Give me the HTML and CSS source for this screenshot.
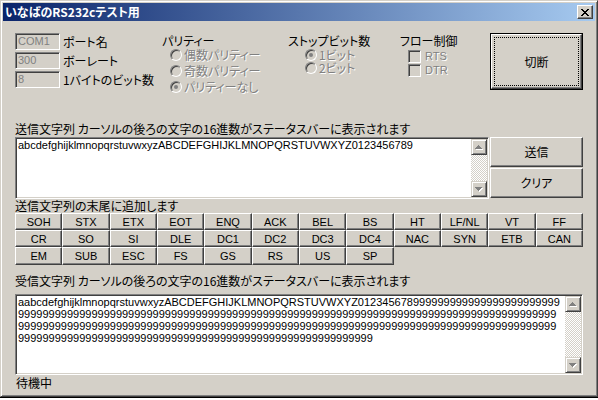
FILE: index.html
```html
<!DOCTYPE html>
<html lang="ja">
<head>
<meta charset="utf-8">
<title>いなばのRS232cテスト用</title>
<link rel="stylesheet" href="styles.css">
</head>
<body>
<div class="window">
  <div class="titlebar">
    <span class="title">いなばのRS232cテスト用</span>
    <span class="closebtn"><svg width="8" height="7" viewBox="0 0 8 7" shape-rendering="crispEdges"><path d="M0 0h2v1h-2zM6 0h2v1h-2zM1 1h2v1h-2zM5 1h2v1h-2zM2 2h4v1h-4zM3 3h2v1h-2zM2 4h4v1h-4zM1 5h2v1h-2zM5 5h2v1h-2zM0 6h2v1h-2zM6 6h2v1h-2z" fill="#000"/></svg></span>
  </div>
  <div class="client">
    <div class="top">
      <div class="port">
        <div class="frow"><div class="edit">COM1</div><span>ポート名</span></div>
        <div class="frow"><div class="edit">300</div><span>ボーレート</span></div>
        <div class="frow"><div class="edit">8</div><span>1バイトのビット数</span></div>
      </div>
      <div class="group parity">
        <div class="ghead">パリティー</div>
        <div class="opt"><span class="radio"></span><span class="dis">偶数パリティー</span></div>
        <div class="opt"><span class="radio"></span><span class="dis">奇数パリティー</span></div>
        <div class="opt"><span class="radio on"></span><span class="dis">パリティーなし</span></div>
      </div>
      <div class="group stop">
        <div class="ghead">ストップビット数</div>
        <div class="opt"><span class="radio on"></span><span class="dis">1ビット</span></div>
        <div class="opt"><span class="radio"></span><span class="dis">2ビット</span></div>
      </div>
      <div class="group flow">
        <div class="ghead">フロー制御</div>
        <div class="opt"><span class="check"></span><span class="dis lt">RTS</span></div>
        <div class="opt"><span class="check"></span><span class="dis lt">DTR</span></div>
      </div>
      <div class="defbtn"><div class="defbtn-in">切断</div></div>
    </div>

    <div class="lbl send-lbl">送信文字列 カーソルの後ろの文字の16進数がステータスバーに表示されます</div>
    <div class="sendrow">
      <div class="textbox sendbox">
        <div class="content">abcdefghijklmnopqrstuvwxyzABCDEFGHIJKLMNOPQRSTUVWXYZ0123456789</div>
        <div class="vscroll">
          <div class="sbtn"><svg width="8" height="5" viewBox="0 0 8 5" shape-rendering="crispEdges"><path d="M4 1h1v1h-1zM3 2h3v1h-3zM2 3h5v1h-5zM1 4h7v1h-7z" fill="#fff"/><path d="M3 0h1v1h-1zM2 1h3v1h-3zM1 2h5v1h-5zM0 3h7v1h-7z" fill="#808080"/></svg></div>
          <div class="track"></div>
          <div class="sbtn"><svg width="8" height="5" viewBox="0 0 8 5" shape-rendering="crispEdges"><path d="M1 1h7v1h-7zM2 2h5v1h-5zM3 3h3v1h-3zM4 4h1v1h-1z" fill="#fff"/><path d="M0 0h7v1h-7zM1 1h5v1h-5zM2 2h3v1h-3zM3 3h1v1h-1z" fill="#808080"/></svg></div>
        </div>
      </div>
      <div class="sendbtns">
        <div class="btn">送信</div>
        <div class="btn">クリア</div>
      </div>
    </div>

    <div class="lbl">送信文字列の末尾に追加します</div>
    <div class="keys">
      <div class="key">SOH</div><div class="key">STX</div><div class="key">ETX</div><div class="key">EOT</div><div class="key">ENQ</div><div class="key">ACK</div><div class="key">BEL</div><div class="key">BS</div><div class="key">HT</div><div class="key">LF/NL</div><div class="key">VT</div><div class="key">FF</div>
      <div class="key">CR</div><div class="key">SO</div><div class="key">SI</div><div class="key">DLE</div><div class="key">DC1</div><div class="key">DC2</div><div class="key">DC3</div><div class="key">DC4</div><div class="key">NAC</div><div class="key">SYN</div><div class="key">ETB</div><div class="key">CAN</div>
      <div class="key">EM</div><div class="key">SUB</div><div class="key">ESC</div><div class="key">FS</div><div class="key">GS</div><div class="key">RS</div><div class="key">US</div><div class="key">SP</div>
    </div>

    <div class="lbl recv-lbl">受信文字列 カーソルの後ろの文字の16進数がステータスバーに表示されます</div>
    <div class="textbox recvbox">
      <div class="content">aabcdefghijklmnopqrstuvwxyzABCDEFGHIJKLMNOPQRSTUVWXYZ012345678999999999999999999999999
9999999999999999999999999999999999999999999999999999999999999999999999999999999999999999
9999999999999999999999999999999999999999999999999999999999999999999999999999999999999999
9999999999999999999999999999999999999999999999999999999999</div>
      <div class="vscroll">
        <div class="sbtn"><svg width="8" height="5" viewBox="0 0 8 5" shape-rendering="crispEdges"><path d="M4 1h1v1h-1zM3 2h3v1h-3zM2 3h5v1h-5zM1 4h7v1h-7z" fill="#fff"/><path d="M3 0h1v1h-1zM2 1h3v1h-3zM1 2h5v1h-5zM0 3h7v1h-7z" fill="#808080"/></svg></div>
        <div class="track"></div>
        <div class="sbtn"><svg width="8" height="5" viewBox="0 0 8 5" shape-rendering="crispEdges"><path d="M1 1h7v1h-7zM2 2h5v1h-5zM3 3h3v1h-3zM4 4h1v1h-1z" fill="#fff"/><path d="M0 0h7v1h-7zM1 1h5v1h-5zM2 2h3v1h-3zM3 3h1v1h-1z" fill="#808080"/></svg></div>
      </div>
    </div>

    <div class="lbl status">待機中</div>
  </div>
</div>
<div class="below"></div>
</body>
</html>
```

FILE: styles.css
```css
* { box-sizing: border-box; margin: 0; padding: 0; }
html, body { width: 598px; height: 400px; overflow: hidden; }
body {
  background: #fff;
  font-family: "Noto Sans CJK JP", "Noto Sans CJK SC", sans-serif;
  font-size: 12px;
  line-height: 14px;
  color: #000;
  font-feature-settings: "palt";
}
.lt { font-family: "Liberation Sans", sans-serif; font-size: 11px; }

.window {
  width: 598px;
  height: 397px;
  background: #d4d0c8;
  border: 1px solid;
  border-color: #d4d0c8 #404040 #404040 #d4d0c8;
  box-shadow: inset 1px 1px #fff, inset -1px -1px #808080;
  padding: 2px;
  display: flex;
  flex-direction: column;
}
.below { height: 3px; border-top: 1px solid #000; background: #fff; }

.titlebar {
  height: 18px;
  background: linear-gradient(to right, #0a246a, #a6caf0);
  display: flex;
  align-items: center;
  justify-content: space-between;
  padding: 0 2px 0 2px;
}
.title { color: #fff; font-weight: bold; font-size: 12px; line-height: 14px; white-space: nowrap; }
.closebtn {
  width: 16px; height: 14px;
  background: #d4d0c8;
  border: 1px solid;
  border-color: #fff #404040 #404040 #fff;
  box-shadow: inset -1px -1px #808080;
  display: flex; align-items: center; justify-content: center;
}

.client { flex: 1; padding: 12px 0 0 12px; display: flex; flex-direction: column; }

.top { display: flex; height: 57px; }
.port { width: 147px; display: flex; flex-direction: column; gap: 2px; }
.frow { display: flex; align-items: center; height: 17px; white-space: nowrap; }
.edit {
  width: 45px; height: 17px; flex: none;
  background: #d4d0c8;
  border: 1px solid;
  border-color: #808080 #fff #fff #808080;
  box-shadow: inset 1px 1px #404040, inset -1px -1px #d4d0c8;
  color: #808080;
  font-family: "Liberation Sans", sans-serif; font-size: 11px; line-height: 15px;
  padding: 0 2px;
  margin-right: 3px;
}
.group { padding-top: 1px; white-space: nowrap; }
.parity { width: 126px; }
.stop { width: 112px; }
.flow { width: 90px; }
.ghead { height: 13px; line-height: 13px; }
.stop .ghead { height: 14px; }
.flow .ghead { height: 15px; }
.opt { display: flex; align-items: center; }
.parity .opt { height: 16px; line-height: 14px; padding-left: 8px; }
.stop .opt { height: 13px; line-height: 13px; padding-left: 17px; }
.flow .opt { height: 14px; line-height: 13px; padding-left: 8px; }
.dis { color: #808080; text-shadow: 1px 1px #fff; }

.radio {
  width: 12px; height: 12px; flex: none;
  border-radius: 50%;
  background: #d4d0c8;
  border: 1px solid;
  border-color: #808080 #fff #fff #808080;
  box-shadow: inset 1px 1px #404040, inset -1px -1px #d4d0c8;
  margin-right: 2px;
  display: flex; align-items: center; justify-content: center;
}
.radio.on::after { content: ""; width: 4px; height: 4px; border-radius: 50%; background: #808080; }
.check {
  width: 13px; height: 13px; flex: none;
  background: #d4d0c8;
  border: 1px solid;
  border-color: #808080 #fff #fff #808080;
  box-shadow: inset 1px 1px #404040, inset -1px -1px #d4d0c8;
  margin-right: 4px;
}

.defbtn { width: 93px; height: 57px; border: 1px solid #000; }
.defbtn-in {
  height: 100%;
  background: #d4d0c8;
  border: 1px solid;
  border-color: #fff #404040 #404040 #fff;
  box-shadow: inset -1px -1px #808080;
  outline: 1px dotted #000;
  outline-offset: -4px;
  display: flex; align-items: center; justify-content: center;
}

.lbl { height: 14px; white-space: nowrap; }
.send-lbl { margin-top: 32px; }
.sendrow { display: flex; margin-top: 1px; height: 62px; }

.textbox {
  background: #fff;
  border: 1px solid;
  border-color: #808080 #fff #fff #808080;
  box-shadow: inset 1px 1px #404040, inset -1px -1px #d4d0c8;
  padding: 1px;
  display: flex;
}
.sendbox { width: 474px; margin-right: 1px; }
.content {
  flex: 1;
  padding-left: 1px;
  font-family: "Liberation Sans", sans-serif; font-size: 11px; line-height: 12px;
  white-space: pre;
  overflow: hidden;
}
.vscroll { width: 16px; flex: none; display: flex; flex-direction: column; }
.track { flex: 1; background: repeating-conic-gradient(#fff 0 25%, #d4d0c8 0 50%) 0 0 / 2px 2px; }
.sbtn {
  width: 16px; height: 16px; flex: none;
  background: #d4d0c8;
  border: 1px solid;
  border-color: #d4d0c8 #404040 #404040 #d4d0c8;
  box-shadow: inset 1px 1px #fff, inset -1px -1px #808080;
  display: flex; align-items: center; justify-content: center;
}

.sendbtns { width: 93px; display: flex; flex-direction: column; gap: 1px; }
.btn {
  height: 30px;
  background: #d4d0c8;
  border: 1px solid;
  border-color: #fff #404040 #404040 #fff;
  box-shadow: inset -1px -1px #808080;
  display: flex; align-items: center; justify-content: center;
}

.keys {
  width: 568px;
  display: grid;
  grid-template-columns: repeat(12, 1fr);
  grid-template-rows: 17px 17px 18px;
}
.key {
  background: #d4d0c8;
  border: 1px solid;
  border-color: #fff #404040 #404040 #fff;
  box-shadow: inset -1px -1px #808080;
  font-family: "Liberation Sans", sans-serif; font-size: 11px; line-height: 12px;
  display: flex; align-items: center; justify-content: center;
}

.recv-lbl { margin-top: 9px; }
.recvbox { width: 568px; height: 81px; margin-top: 6px; }
.status { margin-top: 1px; padding-left: 1px; }
```
